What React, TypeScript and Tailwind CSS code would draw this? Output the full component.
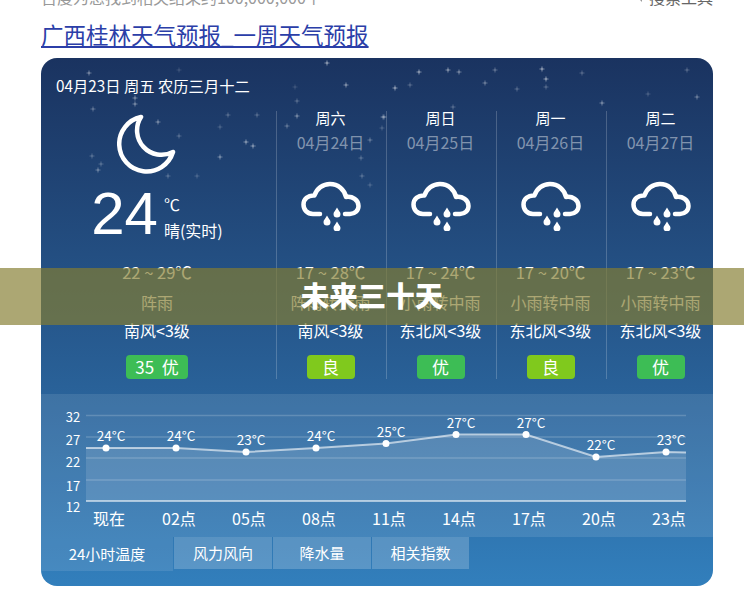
import * as React from "react";

const cjk = "font-['Noto_Sans_CJK_SC','Noto_Sans',sans-serif]";

const days = [
  { week: "周六", date: "04月24日", temp: "17 ~ 28℃", text: "阵雨转大雨", wind: "南风<3级", aqi: "良", good: false },
  { week: "周日", date: "04月25日", temp: "17 ~ 24℃", text: "小雨转中雨", wind: "东北风<3级", aqi: "优", good: true },
  { week: "周一", date: "04月26日", temp: "17 ~ 20℃", text: "小雨转中雨", wind: "东北风<3级", aqi: "良", good: false },
  { week: "周二", date: "04月27日", temp: "17 ~ 23℃", text: "小雨转中雨", wind: "东北风<3级", aqi: "优", good: true },
];

// page coordinates, x y opacity
const stars = [
  [327, 63, 1], [89, 73, 0.8], [419, 72, 1], [448, 70, 0.9], [459, 72, 0.8], [495, 70, 0.6], [542, 69, 1], [546, 79, 1],
  [582, 73, 0.5], [687, 70, 0.5], [346, 85, 0.9], [395, 88, 1], [485, 83, 0.7], [517, 89, 0.5], [135, 98, 0.8], [135, 104, 0.8],
  [697, 97, 0.7], [602, 103, 0.8], [297, 101, 0.5], [297, 116, 0.8], [384, 117, 0.7], [648, 94, 0.4], [546, 87, 0.5], [295, 87, 0.3],
  [93, 109, 0.6], [179, 70, 0.3], [410, 85, 0.5], [453, 107, 0.5], [158, 122, 0.8], [228, 115, 0.5],
  [257, 115, 0.5], [246, 142, 0.9], [253, 146, 0.9], [220, 157, 0.8], [179, 136, 0.5], [220, 127, 0.4], [92, 156, 0.5], [101, 164, 0.5],
  [98, 170, 0.7], [168, 176, 0.5], [197, 176, 0.4], [287, 126, 0.6], [370, 140, 0.6], [361, 158, 0.5], [362, 176, 0.5],
  [370, 185, 0.4], [383, 117, 0.6], [382, 128, 0.4],
];

const grid = [21.5, 43, 64, 86];
const axis = [
  { v: "32", y: 28 },
  { v: "27", y: 51 },
  { v: "22", y: 73 },
  { v: "17", y: 97 },
  { v: "12", y: 118 },
];
const hours = [
  { t: "现在", y: 54, l: "24°C" },
  { t: "02点", y: 54, l: "24°C" },
  { t: "05点", y: 58, l: "23°C" },
  { t: "08点", y: 54, l: "24°C" },
  { t: "11点", y: 49.5, l: "25°C" },
  { t: "14点", y: 40.5, l: "27°C" },
  { t: "17点", y: 40.5, l: "27°C" },
  { t: "20点", y: 63, l: "22°C" },
  { t: "23点", y: 58, l: "23°C" },
];

function Stars() {
  return (
    <svg className="absolute left-0 top-0 pointer-events-none" width="672" height="200" viewBox="0 0 672 200">
      {stars.map(([x, y, o], i) => (
        <path
          key={i}
          transform={`translate(${x - 41} ${y - 58})`}
          d="M0 -3.5 L0.6 -0.6 L3.5 0 L0.6 0.6 L0 3.5 L-0.6 0.6 L-3.5 0 L-0.6 -0.6 Z"
          fill="#fff"
          opacity={o * 0.6}
        />
      ))}
    </svg>
  );
}

function Moon() {
  return (
    <svg width="60" height="60" viewBox="0 0 60 60" fill="none">
      <path
        d="M24 3 A27.5 27.5 0 1 0 56 38 A24.5 24.5 0 0 1 24 3 Z"
        stroke="#fff"
        strokeWidth="4.5"
        strokeLinejoin="round"
      />
    </svg>
  );
}

function RainCloud() {
  return (
    <svg width="60" height="50" viewBox="0 0 60 50" fill="none">
      <path
        d="M19 33 H12 C6 33 2.5 28.5 2.5 23.5 C2.5 18 7 14 13.5 14.5 C15.5 7.5 22 3 29 3 C37 3 43.5 8.5 45 16 C51.5 15 57.5 19 57.5 25 C57.5 29.5 54 33 49 33 H44"
        stroke="#fff"
        strokeWidth="4.5"
        strokeLinecap="round"
        strokeLinejoin="round"
      />
      <path d="M26 34.5 C27.5 37.5 29.5 39 29.5 41 A3.5 3.5 0 0 1 22.5 41 C22.5 39 24.5 37.5 26 34.5 Z" fill="#fff" />
      <path d="M36 26.5 C37.5 29.5 39.5 31 39.5 33 A3.5 3.5 0 0 1 32.5 33 C32.5 31 34.500 29.5 36 26.5 Z" fill="#fff" />
      <path d="M36 40.5 C37.5 43.5 39.5 45 39.5 47 A3.5 3.5 0 0 1 32.5 47 C32.5 45 34.5 43.5 36 40.5 Z" fill="#fff" />
    </svg>
  );
}

function Badge({ label, good, wide }: { label: string; good: boolean; wide?: boolean }) {
  return (
    <div
      className={`${wide ? "w-[62px]" : "w-12"} h-6 rounded-[4px] flex items-center justify-center text-[17px] leading-6 whitespace-pre text-white ${
        good ? "bg-[#3dbd55]" : "bg-[#80c91d]"
      }`}
    >
      {label}
    </div>
  );
}

function Chart() {
  const line = hours.map((h, i) => `${65 + i * 70} ${h.y}`).join(" L");
  const path = `M45 54 L${line} L645 58.5`;
  return (
    <svg width="672" height="143" viewBox="0 0 672 143" className="block">
      <path d={`${path} L645 107 L45 107 Z`} fill="#fff" fillOpacity="0.12" />
      {grid.map((y) => (
        <line key={y} x1="45" x2="645" y1={y} y2={y} stroke="#fff" strokeOpacity="0.18" strokeWidth="1.5" />
      ))}
      <line x1="45" x2="645" y1="107" y2="107" stroke="#fff" strokeOpacity="0.75" strokeWidth="1.5" />
      <path d={path} fill="none" stroke="#fff" strokeOpacity="0.6" strokeWidth="2" />
      {axis.map((a) => (
        <text key={a.v} x="32" y={a.y} textAnchor="middle" fontSize="13" fill="#fff">
          {a.v}
        </text>
      ))}
      {hours.map((h, i) => (
        <g key={h.t}>
          <circle cx={65 + i * 70} cy={h.y} r="3.5" fill="#fff" />
          <text x={70 + i * 70} y={h.y - 7} textAnchor="middle" fontSize="13.5" fill="#fff">
            {h.l}
          </text>
          <text x={68 + i * 70} y="131" textAnchor="middle" fontSize="16" fill="#fff">
            {h.t}
          </text>
        </g>
      ))}
    </svg>
  );
}

export default function App() {
  return (
    <div className={`relative h-[593px] w-[744px] overflow-hidden bg-white ${cjk}`}>
      <div className="flex items-center justify-between h-[14px] -mt-[10px] pl-[41px] pr-[31px] text-[16px] leading-[14px] text-[#999]">
        <span>百度为您找到相关结果约100,000,000个</span>
        <span className="flex items-center gap-1 text-[#666]">
          <svg width="8" height="10" viewBox="0 0 8 10">
            <path d="M0 0 H8 L5 4 V10 L3 8 V4 Z" fill="#999" />
          </svg>
          搜索工具
        </span>
      </div>

      <a className="block ml-[41px] mt-[15px] h-[39px] text-[22.5px] leading-[31px] text-[#2b3ea8] underline">
        广西桂林天气预报_一周天气预报
      </a>

      <div className="relative ml-[41px] w-[672px] h-[528px] rounded-2xl overflow-hidden bg-gradient-to-b from-[#1a3360] to-[#327fbc] text-white">
        <Stars />

        <div className="relative h-[53px] pl-[15px] pt-4 text-[15.3px] leading-[22px]">04月23日 周五 农历三月十二</div>

        <div className="relative flex h-[268px]">
          <div className="w-[235px] shrink-0 pr-[3px] flex flex-col items-center">
            <div className="h-[73px] pt-[3px] mr-[21px]">
              <Moon />
            </div>
            <div className="flex items-start h-[76px]">
              <span className="font-['Liberation_Sans',sans-serif] text-[60px] leading-[60px]">24</span>
              <div className="ml-[6px] pt-[7px] text-[16px] leading-[26px]">
                <div>℃</div>
                <div className="whitespace-nowrap">晴(实时)</div>
              </div>
            </div>
            <div className="h-[25px] text-[16.5px] leading-[25px]">22 ~ 29℃</div>
            <div className="mt-[5px] h-[25px] text-[16px] leading-[25px]">阵雨</div>
            <div className="mt-[3px] h-[25px] text-[16px] leading-[25px]">南风&lt;3级</div>
            <div className="mt-[12px]">
              <Badge label="35  优" good wide />
            </div>
          </div>

          {days.map((d) => (
            <div key={d.week} className="w-[110px] shrink-0 pr-[2px] border-l border-white/20 flex flex-col items-center">
              <div className="h-[25px] mt-[-6px] text-[15px] leading-[25px]">{d.week}</div>
              <div className="h-[25px] text-[16px] leading-[25px] text-white/45">{d.date}</div>
              <div className="h-[50px] mt-[26px]">
                <RainCloud />
              </div>
              <div className="h-[25px] mt-[29px] text-[16.5px] leading-[25px]">{d.temp}</div>
              <div className="mt-[5px] h-[25px] text-[16px] leading-[25px] whitespace-nowrap">{d.text}</div>
              <div className="mt-[3px] h-[25px] text-[16px] leading-[25px] whitespace-nowrap">{d.wind}</div>
              <div className="mt-[12px]">
                <Badge label={d.aqi} good={d.good} />
              </div>
            </div>
          ))}
        </div>

        <div className="mt-[15px] bg-white/10">
          <Chart />
        </div>

        <div className="flex items-start gap-px text-[15px]">
          <div className="w-[132px] h-[34px] bg-white/10 flex items-center justify-center">24小时温度</div>
          <div className="w-[98px] h-[32px] bg-white/20 flex items-center justify-center">风力风向</div>
          <div className="w-[98px] h-[32px] bg-white/20 flex items-center justify-center">降水量</div>
          <div className="w-[97px] h-[32px] bg-white/20 flex items-center justify-center">相关指数</div>
        </div>
      </div>

      <div className="absolute left-0 right-0 top-[268px] h-[57px] pb-[2px] bg-[rgba(133,126,48,0.68)] flex items-center justify-center text-[28.5px] font-black text-white">
        未来三十天
      </div>
    </div>
  );
}
